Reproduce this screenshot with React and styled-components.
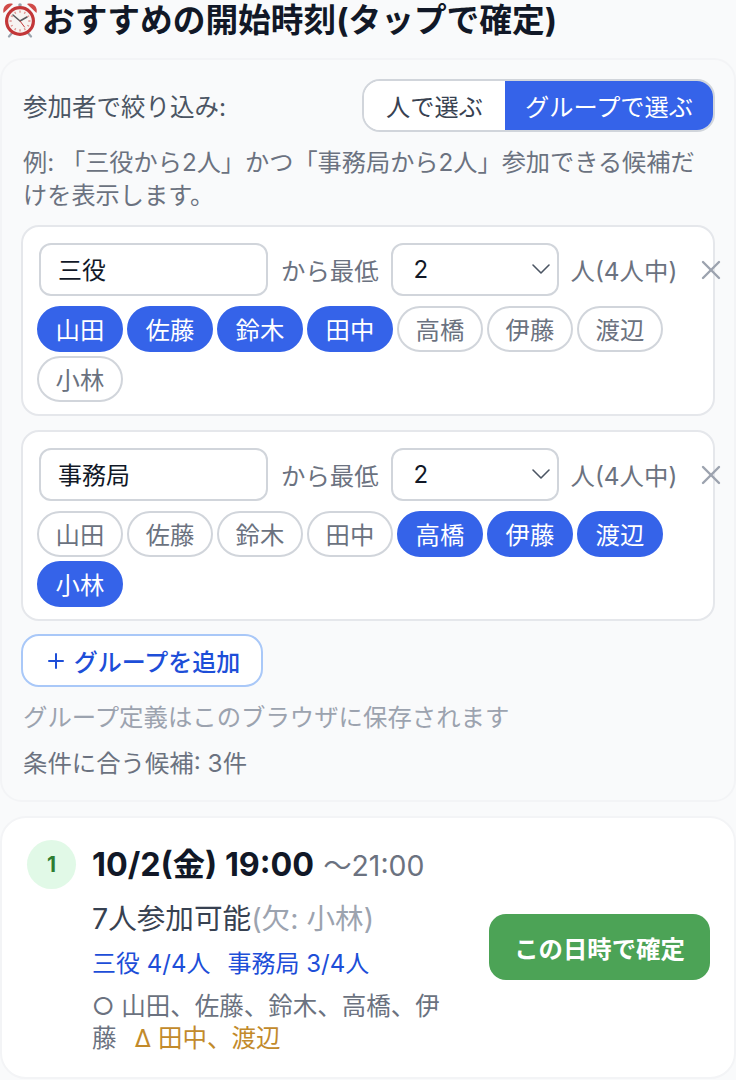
import styled, { createGlobalStyle } from "styled-components";
import { ChevronDown, X, Plus } from "lucide-react";

const GlobalStyle = createGlobalStyle`
  html, body {
    margin: 0;
    padding: 0;
    background: #ffffff;
  }
  * {
    box-sizing: border-box;
  }
  body, input, select, button {
    font-family: Inter, "Noto Sans CJK JP", sans-serif;
  }
`;

const Page = styled.div`
  width: 736px;
  height: 1080px;
  overflow: hidden;
  background: #f9fafb;
`;

const Title = styled.h1`
  display: flex;
  align-items: center;
  gap: 4px;
  height: 40px;
  margin: 0 0 18px;
  padding-left: 2px;
  font-size: 32.7px;
  line-height: 40px;
  font-weight: 700;
  color: #111827;
  white-space: nowrap;
`;

const Panel = styled.section`
  background: #f9fafb;
  border: 2px solid #f3f4f6;
  border-radius: 22px;
  padding: 19px 19px 20px;
  margin-bottom: 14px;
`;

const FilterHead = styled.div`
  display: flex;
  justify-content: space-between;
  align-items: center;
  margin-bottom: 14px;
`;

const FilterLabel = styled.span`
  font-size: 24.5px;
  font-weight: 400;
  color: #4b5563;
  padding-left: 2px;
`;

const Toggle = styled.div`
  display: flex;
  height: 53px;
  width: 353px;
  border: 2px solid #d1d5db;
  border-radius: 18px;
  overflow: hidden;
`;

const ToggleOption = styled.button`
  border: none;
  padding: 0;
  flex: ${(props) => (props.$active ? "0 0 208px" : "1")};
  font-size: 24.2px;
  font-weight: 400;
  background: ${(props) => (props.$active ? "#3563e9" : "#ffffff")};
  color: ${(props) => (props.$active ? "#ffffff" : "#374151")};
`;

const Hint = styled.p`
  margin: 0 0 13px;
  padding-left: 2px;
  font-size: 24.2px;
  line-height: 33px;
  color: #6b7280;
`;

const Groups = styled.div`
  display: flex;
  flex-direction: column;
  gap: 14px;
  margin-bottom: 13px;
`;

const GroupCard = styled.div`
  background: #ffffff;
  border: 2px solid #e5e7eb;
  border-radius: 18px;
  padding: 16px 14px 12px;
`;

const GroupRow = styled.div`
  display: flex;
  align-items: center;
  padding-left: 2px;
  margin-bottom: 10px;
  white-space: nowrap;
`;

const NameInput = styled.input`
  flex: none;
  width: 229px;
  height: 53px;
  border: 2px solid #d1d5db;
  border-radius: 12px;
  padding: 0 17px 2px;
  font-size: 24px;
  color: #111827;
  background: #ffffff;
  outline: none;
`;

const RowText = styled.span`
  font-size: 24.4px;
  color: #6b7280;
  margin: ${(props) => props.$margin};
`;

const SelectWrap = styled.div`
  position: relative;
  flex: none;
  width: 168px;
  height: 53px;
`;

const CountSelect = styled.select`
  appearance: none;
  width: 100%;
  height: 100%;
  border: 2px solid #d1d5db;
  border-radius: 12px;
  padding: 0 21px;
  font-size: 24px;
  color: #111827;
  background: #ffffff;
`;

const SelectArrow = styled.span`
  position: absolute;
  right: 2px;
  top: 10px;
  color: #4b5563;
  pointer-events: none;
`;

const RemoveButton = styled.button`
  display: flex;
  flex: none;
  border: none;
  background: none;
  padding: 0;
  margin-left: 18px;
  color: #9ca3af;
`;

const Chips = styled.div`
  display: flex;
  flex-wrap: wrap;
  gap: 4px;
`;

const Chip = styled.button`
  width: 86px;
  height: 46px;
  padding: 0 0 2px;
  border-radius: 23px;
  border: 2px solid ${(props) => (props.$on ? "#3563e9" : "#d1d5db")};
  background: ${(props) => (props.$on ? "#3563e9" : "#ffffff")};
  color: ${(props) => (props.$on ? "#ffffff" : "#6b7280")};
  font-size: 24.4px;
  font-weight: 400;
`;

const AddButton = styled.button`
  display: flex;
  align-items: center;
  justify-content: center;
  gap: 6px;
  width: 242px;
  height: 53px;
  padding: 0;
  border: 2px solid #a9c8f8;
  border-radius: 18px;
  background: #ffffff;
  color: #1d4ed8;
  font-size: 24px;
  font-weight: 500;
`;

const Note = styled.p`
  margin: ${(props) => props.$margin};
  padding-left: 2px;
  font-size: 24.4px;
  line-height: 34px;
  color: ${(props) => props.$color};
`;

const ResultCard = styled.article`
  display: flex;
  align-items: center;
  background: #ffffff;
  border: 2px solid #f3f4f6;
  border-radius: 26px;
  padding: 22px 24px 23px 25px;
`;

const Rank = styled.div`
  flex: none;
  align-self: flex-start;
  display: flex;
  align-items: center;
  justify-content: center;
  width: 49px;
  height: 49px;
  margin-right: 16px;
  border-radius: 50%;
  background: #e1f9e7;
  color: #2e7d32;
  font-size: 21px;
  font-weight: 700;
`;

const ResultText = styled.div`
  flex: none;
  width: 353px;
  margin-right: 44px;
`;

const When = styled.div`
  display: flex;
  align-items: baseline;
  gap: 9px;
  height: 50px;
  line-height: 50px;
  margin-bottom: 8px;
  white-space: nowrap;
  font-size: 32.3px;
  font-weight: 700;
  color: #111827;
`;

const Until = styled.span`
  font-size: 28.4px;
  font-weight: 400;
  color: #6b7280;
`;

const Attend = styled.div`
  font-size: 28.6px;
  line-height: 42px;
  color: #374151;
  white-space: nowrap;
`;

const Absent = styled.span`
  color: #9ca3af;
`;

const GroupStats = styled.div`
  display: flex;
  gap: 17px;
  margin-top: 3px;
  font-size: 24px;
  line-height: 42px;
  color: #1d4ed8;
`;

const Members = styled.div`
  font-size: 24.5px;
  line-height: 32px;
  margin-top: 5px;
  color: #6b7280;
`;

const Maybe = styled.span`
  color: #c28a2b;
  margin-left: 18px;
`;

const ConfirmButton = styled.button`
  flex: none;
  width: 221px;
  height: 66px;
  padding: 0;
  border: none;
  border-radius: 17px;
  background: #4ca356;
  color: #ffffff;
  font-size: 24.4px;
  font-weight: 700;
`;

function AlarmClock() {
  return (
    <svg width="36" height="36" viewBox="0 0 36 36" aria-hidden="true">
      <path d="M10 31l-3 3.5M26 31l3 3.5" stroke="#9aa3ad" strokeWidth="2.2" strokeLinecap="round" />
      <path d="M1.5 11C0 5 5 0 11 2z" fill="#d04a48" />
      <path d="M34.5 11C36 5 31 0 25 2z" fill="#d04a48" />
      <circle cx="18" cy="3" r="1.8" fill="#9aa3ad" />
      <circle cx="18" cy="19" r="15" fill="#c23638" />
      <circle cx="18" cy="19" r="11.8" fill="#f7f3f1" />
      <path d="M18 19L11 13M18 19L25 15" stroke="#5b5b5f" strokeWidth="1.6" strokeLinecap="round" />
      <path d="M18 19L22.5 25" stroke="#c23638" strokeWidth="1" strokeLinecap="round" />
      <path
        d="M18 8.5v2.2M18 27.3v2.2M7.5 19h2.2M26.3 19h2.2M12.7 9.9l1 1.8M23.3 28.1l-1-1.8M8.9 24.3l1.8-1M27.1 13.7l-1.8 1M23.3 9.9l-1 1.8M12.7 28.1l1-1.8M8.9 13.7l1.8 1M27.1 24.3l-1.8-1"
        stroke="#dd8f8c"
        strokeWidth="1.3"
      />
    </svg>
  );
}

const members = ["山田", "佐藤", "鈴木", "田中", "高橋", "伊藤", "渡辺", "小林"];

const groups = [
  { name: "三役", picked: ["山田", "佐藤", "鈴木", "田中"] },
  { name: "事務局", picked: ["高橋", "伊藤", "渡辺", "小林"] },
];

export default function App() {
  return (
    <Page>
      <GlobalStyle />
      <Title>
        <AlarmClock />
        おすすめの開始時刻(タップで確定)
      </Title>

      <Panel>
        <FilterHead>
          <FilterLabel>参加者で絞り込み:</FilterLabel>
          <Toggle>
            <ToggleOption>人で選ぶ</ToggleOption>
            <ToggleOption $active>グループで選ぶ</ToggleOption>
          </Toggle>
        </FilterHead>
        <Hint>例: 「三役から2人」かつ「事務局から2人」参加できる候補だけを表示します。</Hint>

        <Groups>
          {groups.map((group) => (
            <GroupCard key={group.name}>
              <GroupRow>
                <NameInput defaultValue={group.name} />
                <RowText $margin="0 12px 0 13px">から最低</RowText>
                <SelectWrap>
                  <CountSelect defaultValue="2">
                    <option>1</option>
                    <option>2</option>
                    <option>3</option>
                    <option>4</option>
                  </CountSelect>
                  <SelectArrow>
                    <ChevronDown size={32} strokeWidth={1.2} />
                  </SelectArrow>
                </SelectWrap>
                <RowText $margin="0 0 0 12px">人(4人中)</RowText>
                <RemoveButton>
                  <X size={32} strokeWidth={1.8} />
                </RemoveButton>
              </GroupRow>
              <Chips>
                {members.map((name) => (
                  <Chip key={name} $on={group.picked.includes(name)}>
                    {name}
                  </Chip>
                ))}
              </Chips>
            </GroupCard>
          ))}
        </Groups>

        <AddButton>
          <Plus size={24} strokeWidth={2} />
          グループを追加
        </AddButton>
        <Note $margin="13px 0 0" $color="#9ca3af">グループ定義はこのブラウザに保存されます</Note>
        <Note $margin="12px 0 0" $color="#6b7280">条件に合う候補: 3件</Note>
      </Panel>

      <ResultCard>
        <Rank>1</Rank>
        <ResultText>
          <When>
            10/2(金) 19:00 <Until>〜21:00</Until>
          </When>
          <Attend>
            7人参加可能<Absent>(欠: 小林)</Absent>
          </Attend>
          <GroupStats>
            <span>三役 4/4人</span>
            <span>事務局 3/4人</span>
          </GroupStats>
          <Members>
            ○ 山田、佐藤、鈴木、高橋、伊藤
            <Maybe>Δ 田中、渡辺</Maybe>
          </Members>
        </ResultText>
        <ConfirmButton>この日時で確定</ConfirmButton>
      </ResultCard>
    </Page>
  );
}
